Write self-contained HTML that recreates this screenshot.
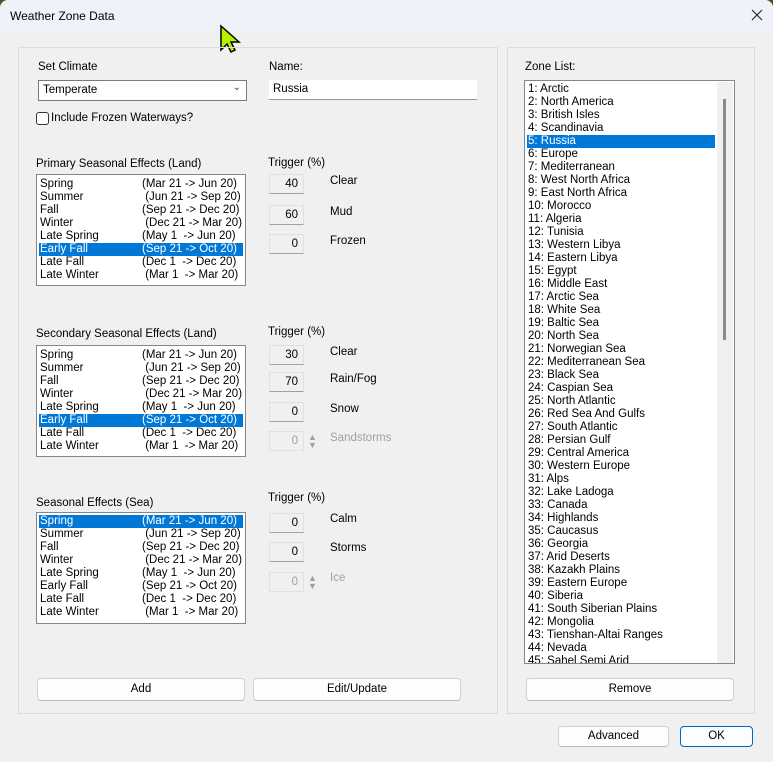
<!DOCTYPE html>
<html><head><meta charset="utf-8"><style>
*{box-sizing:border-box;margin:0;padding:0}
body{width:773px;height:762px;overflow:hidden;background:#5a4a30;font-family:"Liberation Sans",sans-serif;font-size:11.5px;color:#000;position:relative}
.win{position:absolute;left:0;top:0;width:773px;height:762px;background:#f0f0f0;border-radius:8px 8px 0 0;overflow:hidden}
.title{position:absolute;left:0;top:0;width:773px;height:31px;background:#eff2f9}
.a{position:absolute;white-space:pre}
.grp{position:absolute;border:1px solid #dcdcdc}
.box{position:absolute;background:#fff;border:1px solid #828790}
.row{height:13px;line-height:13px;padding-left:1px;white-space:pre;position:relative}
.row span{position:absolute;left:103px}
.sel{background:#0078d7;color:#fff}
.inp{position:absolute;width:35px;height:20px;background:#f0f0f0;border:1px solid #e0e0e0;border-bottom:1px solid #a0a0a0;text-align:right;padding-right:5px;line-height:19px}
.dis{color:#a0a0a0;border-bottom-color:#e0e0e0}
.btn{position:absolute;background:#fdfdfd;border:1px solid #d0d0d0;border-bottom-color:#b8b8b8;border-radius:4px;text-align:center;line-height:20px}
</style></head><body><div class="win">
<div class="title"></div>
<div class="a" style="left:10px;top:9px;font-size:12px">Weather Zone Data</div>
<svg class="a" style="left:751px;top:9px" width="12" height="12"><path d="M1 1 L11 11 M11 1 L1 11" stroke="#222" stroke-width="1.1"/></svg>
<svg class="a" style="left:219px;top:24px" width="24" height="30"><path d="M2 2 L2 26 L8 20 L12 28 L16 26 L12 18 L20 18 Z" fill="#b7f000" stroke="#000" stroke-width="1.5"/></svg>
<div class="grp" style="left:18px;top:47px;width:480px;height:667px"></div>
<div class="grp" style="left:507px;top:47px;width:248px;height:667px"></div>
<div class="a" style="left:38px;top:61px">Set Climate</div>
<div class="a" style="left:38px;top:80px;width:209px;height:21px;background:#fff;border:1px solid #7a7a7a;padding:3px 4px">Temperate<span style="position:absolute;right:5px;top:1px;font-size:10px;color:#444">&#8964;</span></div>
<div class="a" style="left:36px;top:112px;width:13px;height:13px;border:1px solid #333;border-radius:3px;background:#fff"></div>
<div class="a" style="left:51px;top:112px">Include Frozen Waterways?</div>
<div class="a" style="left:269px;top:61px">Name:</div>
<div class="a" style="left:269px;top:80px;width:208px;height:20px;background:#fff;border-bottom:1px solid #999;padding:3px 4px">Russia</div>

<div class="a" style="left:36px;top:158px">Primary Seasonal Effects (Land)</div>
<div class="box" style="left:36px;top:174px;width:210px;height:112px;padding:3px 2px">
<div class="row">Spring<span>(Mar 21 -&gt; Jun 20)</span></div><div class="row">Summer<span> (Jun 21 -&gt; Sep 20)</span></div><div class="row">Fall<span>(Sep 21 -&gt; Dec 20)</span></div><div class="row">Winter<span> (Dec 21 -&gt; Mar 20)</span></div><div class="row">Late Spring<span>(May 1  -&gt; Jun 20)</span></div><div class="row sel">Early Fall<span>(Sep 21 -&gt; Oct 20)</span></div><div class="row">Late Fall<span>(Dec 1  -&gt; Dec 20)</span></div><div class="row">Late Winter<span> (Mar 1  -&gt; Mar 20)</span></div></div>
<div class="a" style="left:268px;top:157px">Trigger (%)</div>
<div class="inp" style="left:269px;top:174px">40</div><div class="a" style="left:330px;top:175px">Clear</div>
<div class="inp" style="left:269px;top:205px">60</div><div class="a" style="left:330px;top:206px">Mud</div>
<div class="inp" style="left:269px;top:234px">0</div><div class="a" style="left:330px;top:235px">Frozen</div>

<div class="a" style="left:36px;top:328px">Secondary Seasonal Effects (Land)</div>
<div class="box" style="left:36px;top:345px;width:210px;height:112px;padding:3px 2px">
<div class="row">Spring<span>(Mar 21 -&gt; Jun 20)</span></div><div class="row">Summer<span> (Jun 21 -&gt; Sep 20)</span></div><div class="row">Fall<span>(Sep 21 -&gt; Dec 20)</span></div><div class="row">Winter<span> (Dec 21 -&gt; Mar 20)</span></div><div class="row">Late Spring<span>(May 1  -&gt; Jun 20)</span></div><div class="row sel">Early Fall<span>(Sep 21 -&gt; Oct 20)</span></div><div class="row">Late Fall<span>(Dec 1  -&gt; Dec 20)</span></div><div class="row">Late Winter<span> (Mar 1  -&gt; Mar 20)</span></div></div>
<div class="a" style="left:268px;top:326px">Trigger (%)</div>
<div class="inp" style="left:269px;top:345px">30</div><div class="a" style="left:330px;top:346px">Clear</div>
<div class="inp" style="left:269px;top:372px">70</div><div class="a" style="left:330px;top:373px">Rain/Fog</div>
<div class="inp" style="left:269px;top:402px">0</div><div class="a" style="left:330px;top:403px">Snow</div>
<div class="inp dis" style="left:269px;top:431px">0</div><div class="a" style="left:308px;top:433px;color:#a0a0a0;font-size:9px;line-height:8px">▲<br>▼</div><div class="a" style="left:330px;top:432px;color:#a0a0a0">Sandstorms</div>

<div class="a" style="left:36px;top:497px">Seasonal Effects (Sea)</div>
<div class="box" style="left:36px;top:512px;width:210px;height:112px;padding:2px 2px">
<div class="row sel">Spring<span>(Mar 21 -&gt; Jun 20)</span></div><div class="row">Summer<span> (Jun 21 -&gt; Sep 20)</span></div><div class="row">Fall<span>(Sep 21 -&gt; Dec 20)</span></div><div class="row">Winter<span> (Dec 21 -&gt; Mar 20)</span></div><div class="row">Late Spring<span>(May 1  -&gt; Jun 20)</span></div><div class="row">Early Fall<span>(Sep 21 -&gt; Oct 20)</span></div><div class="row">Late Fall<span>(Dec 1  -&gt; Dec 20)</span></div><div class="row">Late Winter<span> (Mar 1  -&gt; Mar 20)</span></div></div>
<div class="a" style="left:268px;top:492px">Trigger (%)</div>
<div class="inp" style="left:269px;top:513px">0</div><div class="a" style="left:330px;top:513px">Calm</div>
<div class="inp" style="left:269px;top:542px">0</div><div class="a" style="left:330px;top:542px">Storms</div>
<div class="inp dis" style="left:269px;top:572px">0</div><div class="a" style="left:308px;top:574px;color:#a0a0a0;font-size:9px;line-height:8px">▲<br>▼</div><div class="a" style="left:330px;top:572px;color:#a0a0a0">Ice</div>

<div class="btn" style="left:37px;top:678px;width:208px;height:23px">Add</div>
<div class="btn" style="left:253px;top:678px;width:208px;height:23px">Edit/Update</div>

<div class="a" style="left:525px;top:61px">Zone List:</div>
<div class="box" style="left:524px;top:80px;width:211px;height:584px;padding:2px 2px;overflow:hidden">
<div style="position:absolute;left:192px;top:1px;width:16px;height:582px;background:#f0f0f0"></div>
<div style="position:absolute;left:198px;top:18px;width:3px;height:241px;background:#8a8a8a"></div>
<div style="width:188px">
<div class="row">1: Arctic</div><div class="row">2: North America</div><div class="row">3: British Isles</div><div class="row">4: Scandinavia</div><div class="row sel">5: Russia</div><div class="row">6: Europe</div><div class="row">7: Mediterranean</div><div class="row">8: West North Africa</div><div class="row">9: East North Africa</div><div class="row">10: Morocco</div><div class="row">11: Algeria</div><div class="row">12: Tunisia</div><div class="row">13: Western Libya</div><div class="row">14: Eastern Libya</div><div class="row">15: Egypt</div><div class="row">16: Middle East</div><div class="row">17: Arctic Sea</div><div class="row">18: White Sea</div><div class="row">19: Baltic Sea</div><div class="row">20: North Sea</div><div class="row">21: Norwegian Sea</div><div class="row">22: Mediterranean Sea</div><div class="row">23: Black Sea</div><div class="row">24: Caspian Sea</div><div class="row">25: North Atlantic</div><div class="row">26: Red Sea And Gulfs</div><div class="row">27: South Atlantic</div><div class="row">28: Persian Gulf</div><div class="row">29: Central America</div><div class="row">30: Western Europe</div><div class="row">31: Alps</div><div class="row">32: Lake Ladoga</div><div class="row">33: Canada</div><div class="row">34: Highlands</div><div class="row">35: Caucasus</div><div class="row">36: Georgia</div><div class="row">37: Arid Deserts</div><div class="row">38: Kazakh Plains</div><div class="row">39: Eastern Europe</div><div class="row">40: Siberia</div><div class="row">41: South Siberian Plains</div><div class="row">42: Mongolia</div><div class="row">43: Tienshan-Altai Ranges</div><div class="row">44: Nevada</div><div class="row">45: Sahel Semi Arid</div>
</div></div>
<div class="btn" style="left:526px;top:678px;width:208px;height:23px">Remove</div>
<div class="btn" style="left:558px;top:726px;width:111px;height:21px;line-height:19px">Advanced</div>
<div class="btn" style="left:680px;top:726px;width:73px;height:21px;line-height:19px;border:1px solid #0067c0">OK</div>
</div></body></html>
